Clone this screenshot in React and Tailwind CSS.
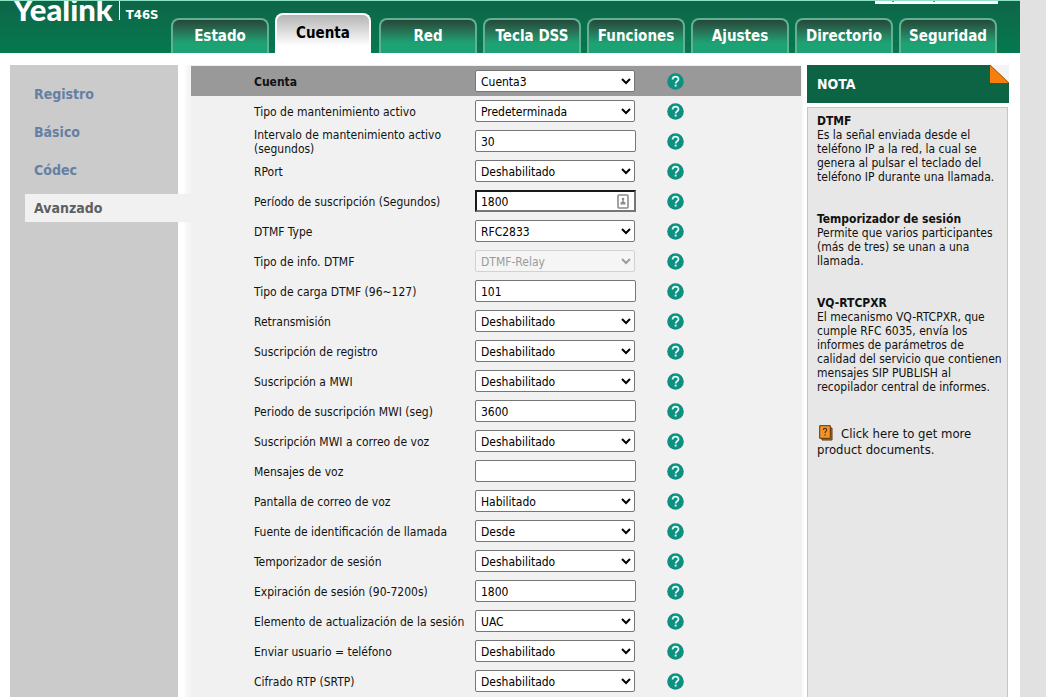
import clsx from 'clsx'

const tabs = ['Estado', 'Cuenta', 'Red', 'Tecla DSS', 'Funciones', 'Ajustes', 'Directorio', 'Seguridad']

const menu = ['Registro', 'Básico', 'Códec', 'Avanzado']

const fields = [
  { id: 'account', label: 'Cuenta', type: 'select', value: 'Cuenta3', heading: true },
  { id: 'keep-alive', label: 'Tipo de mantenimiento activo', type: 'select', value: 'Predeterminada' },
  { id: 'keep-alive-interval', label: 'Intervalo de mantenimiento activo (segundos)', type: 'text', value: '30' },
  { id: 'rport', label: 'RPort', type: 'select', value: 'Deshabilitado' },
  { id: 'subscribe-period', label: 'Período de suscripción (Segundos)', type: 'text', value: '1800', focused: true },
  { id: 'dtmf-type', label: 'DTMF Type', type: 'select', value: 'RFC2833' },
  { id: 'dtmf-info', label: 'Tipo de info. DTMF', type: 'select', value: 'DTMF-Relay', disabled: true },
  { id: 'dtmf-payload', label: 'Tipo de carga DTMF (96~127)', type: 'text', value: '101' },
  { id: 'retransmission', label: 'Retransmisión', type: 'select', value: 'Deshabilitado' },
  { id: 'subscribe-register', label: 'Suscripción de registro', type: 'select', value: 'Deshabilitado' },
  { id: 'subscribe-mwi', label: 'Suscripción a MWI', type: 'select', value: 'Deshabilitado' },
  { id: 'mwi-period', label: 'Periodo de suscripción MWI (seg)', type: 'text', value: '3600' },
  { id: 'mwi-voicemail', label: 'Suscripción MWI a correo de voz', type: 'select', value: 'Deshabilitado' },
  { id: 'voice-mail', label: 'Mensajes de voz', type: 'text', value: '' },
  { id: 'voice-mail-display', label: 'Pantalla de correo de voz', type: 'select', value: 'Habilitado' },
  { id: 'caller-id', label: 'Fuente de identificación de llamada', type: 'select', value: 'Desde' },
  { id: 'session-timer', label: 'Temporizador de sesión', type: 'select', value: 'Deshabilitado' },
  { id: 'session-expires', label: 'Expiración de sesión (90-7200s)', type: 'text', value: '1800' },
  { id: 'session-refresher', label: 'Elemento de actualización de la sesión', type: 'select', value: 'UAC' },
  { id: 'send-user-phone', label: 'Enviar usuario = teléfono', type: 'select', value: 'Deshabilitado' },
  { id: 'srtp', label: 'Cifrado RTP (SRTP)', type: 'select', value: 'Deshabilitado' },
]

const notes = [
  {
    title: 'DTMF',
    text: 'Es la señal enviada desde el teléfono IP a la red, la cual se genera al pulsar el teclado del teléfono IP durante una llamada.',
  },
  {
    title: 'Temporizador de sesión',
    text: 'Permite que varios participantes (más de tres) se unan a una llamada.',
  },
  {
    title: 'VQ-RTCPXR',
    text: 'El mecanismo VQ-RTCPXR, que cumple RFC 6035, envía los informes de parámetros de calidad del servicio que contienen mensajes SIP PUBLISH al recopilador central de informes.',
  },
]

function HelpIcon() {
  return (
    <svg viewBox="0 0 17 17" className="h-[17px] w-[17px]" aria-hidden="true">
      <circle cx="8.5" cy="8.5" r="8.3" fill="#0f8f80" />
      <path d="M5.6 6.6c0-3.9 5.9-3.7 5.9-.4 0 2-2.8 2.1-2.8 4.2" fill="none" stroke="#dffcf6" strokeWidth="1.8" />
      <rect x="7.7" y="11.6" width="1.9" height="1.9" fill="#dffcf6" />
    </svg>
  )
}

function AutofillIcon() {
  return (
    <svg viewBox="0 0 12 15" className="pointer-events-none absolute top-1 right-[7px] h-[15px] w-3" aria-hidden="true">
      <rect x="1" y="1" width="10" height="13" rx="1" fill="#fff" stroke="#8c8c8c" strokeWidth="1.6" />
      <circle cx="6" cy="5" r="1.3" fill="#8c8c8c" />
      <path d="M5.3 5h1.4v2.6l1.8 1v2h-5v-2l1.8-1z" fill="#8c8c8c" />
    </svg>
  )
}

function DocIcon() {
  return (
    <svg viewBox="0 0 14 16" className="mr-2 ml-[2px] inline-block h-4 w-[14px] align-[-3px]" aria-hidden="true">
      <path d="M3 3h10v12H3z" fill="#c9781d" stroke="#5a3308" />
      <path d="M.7.7h10.6v12.6H.7z" fill="#f2942c" stroke="#5a3308" />
      <path d="M4.3 5c0-2.2 3.4-2.2 3.4 0 0 1.3-1.7 1.3-1.7 3" fill="none" stroke="#5a3308" strokeWidth="1.1" />
      <rect x="5.4" y="9.3" width="1.3" height="1.3" fill="#5a3308" />
    </svg>
  )
}

function Header() {
  return (
    <header className="relative flex h-[53px] overflow-hidden border-t border-[#8fe3c4] bg-linear-to-b from-[#0d6648] to-[#05794f]">
      <div className="flex h-[22px] w-[171px] shrink-0 items-end pl-[13px] text-white">
        <span className="font-['Lato'] text-[31px] leading-7 font-black">Yealink</span>
        <span className="mb-[3px] ml-[6px] h-[19px] w-px bg-white" />
        <span className="ml-[6px] text-[13px] leading-4 font-bold">T46S</span>
      </div>
      <nav className="flex items-end gap-[6px]">
        {tabs.map((tab) => (
          <a
            key={tab}
            href="#"
            className={clsx(
              'flex justify-center rounded-t-lg border-2 border-b-0 text-[15px] font-bold',
              tab === 'Cuenta'
                ? 'mr-[2px] h-10 w-24 border-white bg-linear-to-b from-[#b5b5b5] to-white to-80% pt-[7px] text-black'
                : 'h-[35px] w-[98px] border-[#63b093] bg-linear-to-b from-[#24483a] to-[#1da274] to-70% pt-[5px] text-white'
            )}
          >
            {tab}
          </a>
        ))}
      </nav>
      <select
        aria-label="Idioma"
        className="absolute top-[-18px] right-[22px] h-[21px] w-[123px] appearance-none bg-white px-1 pt-[2px] text-xs text-black"
      >
        <option>Español(Spanish)</option>
      </select>
    </header>
  )
}

function Sidebar() {
  return (
    <nav className="flex w-[168px] shrink-0 flex-col gap-[10px] bg-[#cbcbcb] pt-[15px] pl-[15px]">
      {menu.map((item) => (
        <a
          key={item}
          href="#"
          className={clsx(
            'flex h-7 items-center pl-[9px] text-sm font-bold',
            item === 'Avanzado' ? 'z-10 -mr-[13px] bg-[#f1f1f1] text-[#5f5f5f]' : 'text-[#6580a3]'
          )}
        >
          {item}
        </a>
      ))}
    </nav>
  )
}

function Control({ field }) {
  if (field.type === 'select') {
    return (
      <select
        id={field.id}
        disabled={field.disabled}
        className="h-[22px] w-40 rounded-xs border border-[#767676] bg-white px-px pt-[2px] text-xs text-black disabled:border-[#d2d2d2] disabled:bg-[#f5f5f5] disabled:text-[#9b9b9b] disabled:opacity-100"
      >
        <option>{field.value}</option>
      </select>
    )
  }

  return (
    <div className="relative">
      <input
        id={field.id}
        type="text"
        defaultValue={field.value}
        className={clsx(
          'block h-[22px] w-full bg-white pt-px text-xs text-black',
          field.focused
            ? 'border-2 border-t-[#1a1a1a] border-r-[#767676] border-b-[#767676] border-l-[#1a1a1a] px-1'
            : 'rounded-xs border border-[#767676] px-[5px]'
        )}
      />
      {field.focused && <AutofillIcon />}
    </div>
  )
}

function FieldRow({ field }) {
  return (
    <div
      className={clsx(
        'grid h-[30px] grid-cols-[221px_161px_auto] items-center justify-start pl-[63px]',
        field.heading && 'bg-[#999999]'
      )}
    >
      <label htmlFor={field.id} className={clsx('pt-[2px] text-xs leading-[14px]', field.heading && 'font-bold')}>
        {field.label}
      </label>
      <Control field={field} />
      <button type="button" aria-label={`Ayuda: ${field.label}`} className="ml-[31px]">
        <HelpIcon />
      </button>
    </div>
  )
}

function NotePanel() {
  return (
    <aside className="flex w-[202px] shrink-0 flex-col gap-1">
      <div className="flex h-[38px] items-start justify-between bg-[#0c6445]">
        <h2 className="self-center pl-[10px] text-sm font-bold text-white">NOTA</h2>
        <svg viewBox="0 0 19 18" className="h-[18px] w-[19px]" aria-hidden="true">
          <path d="M0 0h19v18z" fill="#f4f4f4" />
          <path d="M0 0v18h19z" fill="#f57f0a" />
          <path d="M0 0l19 18" stroke="#a85a10" strokeWidth="1" />
        </svg>
      </div>
      <div className="mr-px flex-1 border border-b-0 border-[#c9c4c4] bg-[#e7e7e7] pt-[6px] pr-[3px] pl-[9px] text-xs leading-[14px]">
        {notes.map((note) => (
          <section key={note.title} className="mb-7">
            <h3 className="font-bold">{note.title}</h3>
            <p>{note.text}</p>
          </section>
        ))}
        <a href="#" className="mt-[31px] block text-[13px] leading-4">
          <DocIcon />
          Click here to get more product documents.
        </a>
      </div>
    </aside>
  )
}

export default function App() {
  return (
    <div className="flex min-h-screen bg-[#e1e1e1] pr-[26px] font-['DejaVu_Sans_Condensed','DejaVu_Sans',sans-serif] text-[#111]">
      <div className="flex min-w-0 flex-1 flex-col bg-white">
        <Header />
        <div className="flex flex-1 pt-3 pr-[11px] pl-[10px]">
          <Sidebar />
          <div className="w-[13px] shrink-0 bg-linear-to-r from-white from-40% to-[#f5f5f5] to-80%" />
          <main className="min-w-0 flex-1 bg-[#f1f1f1] pt-px">
            {fields.map((field) => (
              <FieldRow key={field.id} field={field} />
            ))}
          </main>
          <div className="w-[6px] shrink-0 bg-linear-to-r from-[#f1f1f1] to-white to-50%" />
          <NotePanel />
        </div>
      </div>
    </div>
  )
}
